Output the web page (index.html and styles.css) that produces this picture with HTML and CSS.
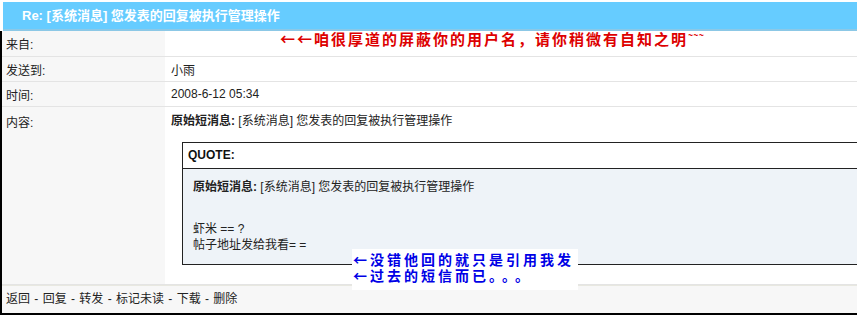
FILE: index.html
```html
<!DOCTYPE html>
<html lang="zh">
<head>
<meta charset="utf-8">
<title>Re: [系统消息] 您发表的回复被执行管理操作</title>
<link rel="stylesheet" href="styles.css">
</head>
<body>
<div class="page">
  <div class="header">Re: [系统消息] 您发表的回复被执行管理操作</div>
  <div class="msg">
    <div class="row r1">
      <div class="label">来自:</div>
      <div class="value"></div>
    </div>
    <div class="row">
      <div class="label">发送到:</div>
      <div class="value">小雨</div>
    </div>
    <div class="row">
      <div class="label">时间:</div>
      <div class="value">2008-6-12 05:34</div>
    </div>
    <div class="row content">
      <div class="label">内容:</div>
      <div class="value">
        <div class="line"><b>原始短消息:</b> [系统消息] 您发表的回复被执行管理操作</div>
        <div class="quote">
          <div class="quote-head">QUOTE:</div>
          <div class="quote-body">
            <div class="line"><b>原始短消息:</b> [系统消息] 您发表的回复被执行管理操作</div>
            <div class="line gap">虾米 == ?</div>
            <div class="line">帖子地址发给我看= =</div>
          </div>
        </div>
      </div>
    </div>
    <div class="footer">返回 - 回复 - 转发 - 标记未读 - 下载 - 删除</div>
  </div>
  <div class="note-red">←←咱很厚道的屏蔽你的用户名，请你稍微有自知之明<span class="tilde">~~~</span></div>
  <div class="note-blue"><div class="nl">←没错他回的就只是引用我发</div><div class="nl">←过去的短信而已<span class="dots">。。。</span></div></div>
</div>
</body>
</html>
```

FILE: styles.css
```css
html, body {
  margin: 0;
  padding: 0;
  background: #ffffff;
  overflow: hidden;
}
body {
  font-family: "Liberation Sans", "Noto Sans CJK SC", sans-serif;
  font-size: 12px;
  color: #222;
}
.page {
  position: relative;
  width: 857px;
  height: 315px;
  padding-top: 2px;
  box-sizing: border-box;
  overflow: hidden;
}
.header {
  margin-left: 3px;
  height: 27px;
  line-height: 27px;
  background: #66ccff;
  border-bottom: 2px solid #8cc8e6;
  color: #ffffff;
  font-weight: bold;
  font-size: 13px;
  padding-left: 19px;
}
.msg {
  border-left: 2px solid #000;
  border-bottom: 2px solid #000;
}
.row {
  display: grid;
  grid-template-columns: 163px 1fr;
  height: 24px;
  border-bottom: 1px solid #e4e4e4;
}
.row.r1 { height: 25px; }
.label {
  background: #f7f7f7;
  padding-left: 4px;
  display: flex;
  align-items: center;
}
.value {
  background: #fff;
  padding-left: 6px;
  display: flex;
  align-items: center;
  min-width: 0;
  overflow: hidden;
}
.row.content {
  height: 177px;
}
.row.content .label,
.row.content .value {
  display: block;
  padding-top: 6px;
}
.line {
  line-height: 16px;
  white-space: nowrap;
}
.quote {
  margin-top: 13px;
  margin-left: 11px;
  width: 720px;
  border: 1px solid #222;
}
.quote-head {
  height: 25px;
  line-height: 25px;
  padding-left: 5px;
  font-weight: bold;
  color: #111;
  background: #fff;
  border-bottom: 1px solid #222;
}
.quote-body {
  background: #eef3f8;
  padding: 10px;
  height: 75px;
}
.quote-body .gap {
  margin-top: 26px;
}
.footer {
  height: 27px;
  line-height: 27px;
  background: #f7f7f7;
  padding-left: 4px;
  border-top: 1px solid #e8e8e0;
  word-spacing: 1px;
}
.note-red {
  position: absolute;
  left: 280px;
  top: 30px;
  color: #dd0000;
  font-family: "Noto Sans CJK SC", sans-serif;
  font-weight: bold;
  font-size: 15px;
  letter-spacing: 2px;
  line-height: 18px;
  white-space: nowrap;
}
.note-red .tilde {
  font-size: 9px;
  letter-spacing: 0;
  vertical-align: top;
  line-height: 9px;
}
.note-blue {
  position: absolute;
  left: 352px;
  top: 249px;
  width: 226px;
  height: 41px;
  background: #ffffff;
  color: #0000e6;
  font-family: "Noto Sans CJK SC", sans-serif;
  font-weight: bold;
  font-size: 14px;
  letter-spacing: 3px;
  padding: 2px 0 0 1px;
  box-sizing: border-box;
  white-space: nowrap;
}
.note-blue .nl {
  height: 16px;
  line-height: 16px;
}
.note-blue .dots {
  letter-spacing: 6px;
}
```
